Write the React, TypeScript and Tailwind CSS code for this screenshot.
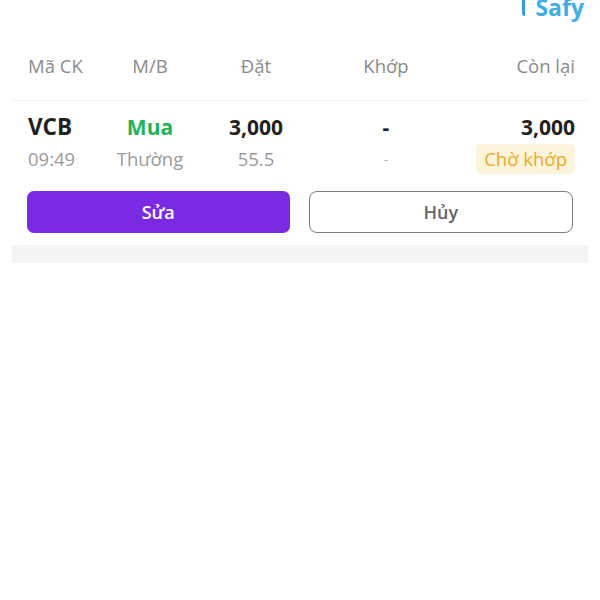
const cols = ["w-[80px] text-left", "w-[84px] text-center", "w-[128px] text-center", "w-[132px] text-center", "flex-1 text-right"]

const App = () => {
  return (
    <div className="w-[600px] h-[600px] bg-white font-['Open_Sans',sans-serif] overflow-hidden">
      {/* top logo, cut off */}
      <div className="h-[22px] overflow-hidden flex justify-end items-start pr-[16px]">
        <div className="flex items-start -mt-[4px] text-[23px] leading-none font-bold text-[#3eaee4]">
          <span className="mr-[10px] mt-[4px] w-[3px] h-[16px] rounded-bl-[3px] bg-[#2f9fe0]"></span>
          <span>Safy</span>
        </div>
      </div>

      <div className="px-[12px]">
        {/* heading */}
        <div className="mt-[32px] h-[24px] leading-[24px] flex pl-[16px] pr-[13px] text-[18.5px] text-[#8a8a8a]">
          <span className={cols[0]}>Mã CK</span>
          <span className={cols[1]}>M/B</span>
          <span className={cols[2]}>Đặt</span>
          <span className={cols[3]}>Khớp</span>
          <span className={cols[4]}>Còn lại</span>
        </div>

        {/* order card */}
        <div className="mt-[22px] border-t border-[#f1f1f1]">
          <div className="mt-[12px] h-[28px] leading-[28px] flex pl-[16px] pr-[13px] text-[21px] font-bold text-[#222]">
            <span className={cols[0] + " text-[22.5px]"}>VCB</span>
            <span className={cols[1] + " text-[#1fb35a]"}>Mua</span>
            <span className={cols[2]}>3,000</span>
            <span className={cols[3]}>-</span>
            <span className={cols[4]}>3,000</span>
          </div>
          <div className="mt-[3px] h-[30px] flex items-center pl-[16px] pr-[13px] text-[18.5px] text-[#9a9a9a]">
            <span className={cols[0]}>09:49</span>
            <span className={cols[1]}>Thường</span>
            <span className={cols[2]}>55.5</span>
            <span className={cols[3] + " text-[#b5b5b5] text-[14px]"}>-</span>
            <span className={cols[4] + " flex justify-end"}>
              <span className="h-[30px] leading-[30px] px-[8px] rounded-[5px] bg-[#fdf4dc] text-[#eea91c]">Chờ khớp</span>
            </span>
          </div>
          <div className="mt-[17px] flex gap-[19px] px-[15px]">
            <button className="flex-1 h-[42px] rounded-[7px] bg-[#7b2ae3] text-white text-[18px] font-semibold">Sửa</button>
            <button className="flex-1 h-[42px] rounded-[8px] border-[1.5px] border-[#7d7d7d] text-[#666] text-[18px] font-semibold">Hủy</button>
          </div>
        </div>

        {/* bottom strip */}
        <div className="mt-[12px] h-[18px] bg-[#f4f4f4]"></div>
      </div>
    </div>
  )
}
export default App
